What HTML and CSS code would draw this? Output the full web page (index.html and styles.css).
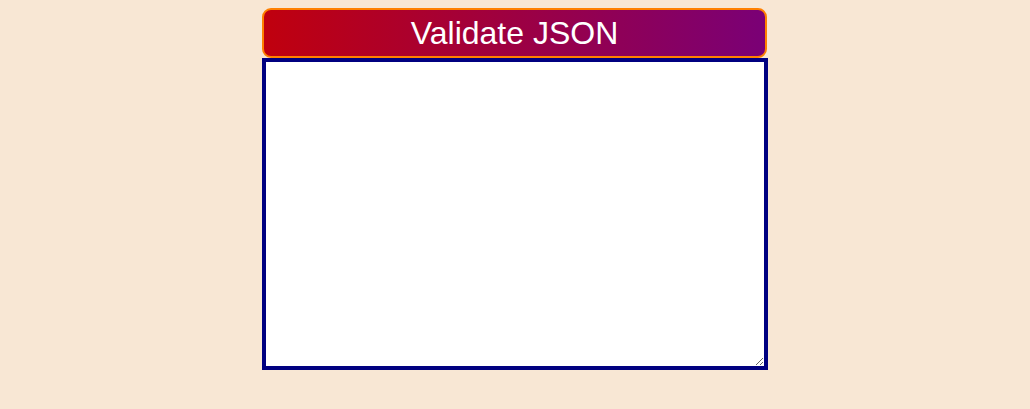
FILE: index.html
```html
<!DOCTYPE html>
<html>
<head>
<meta charset="utf-8">
<link rel="stylesheet" href="styles.css">
</head>
<body>
<div class="wrap">
  <button class="validate">Validate JSON</button>
  <textarea class="input"></textarea>
</div>
</body>
</html>
```
FILE: styles.css
```css
html, body {
  margin: 0;
  padding: 0;
  background: #f8e7d4;
  height: 100%;
}
.wrap {
  width: 506px;
  margin: 0 auto;
  padding-top: 8px;
  display: flex;
  flex-direction: column;
  gap: 0;
}
.validate {
  box-sizing: border-box;
  width: 505px;
  height: 50px;
  border: 2px solid #ff8000;
  border-radius: 9px;
  background: linear-gradient(to right, #c0000e, #7a0076);
  color: #fff;
  font-family: "Liberation Sans", Arial, sans-serif;
  font-size: 32px;
  padding: 0;
  margin: 0;
  line-height: 44px;
}
.input {
  box-sizing: border-box;
  width: 506px;
  height: 312px;
  border: 4px solid #000080;
  background: #fff;
  margin: 0;
  padding: 2px;
  resize: both;
}
```
